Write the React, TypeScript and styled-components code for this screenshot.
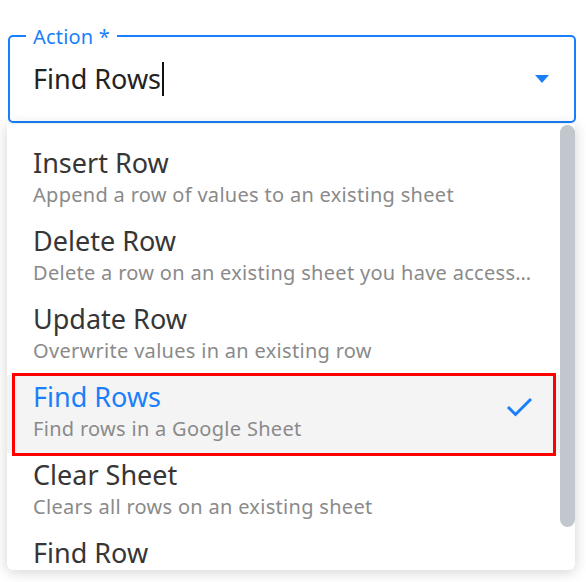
import styled, { createGlobalStyle } from 'styled-components'

const BLUE = '#1a7ffa'

const GlobalStyle = createGlobalStyle`
  body {
    margin: 0;
    background: #ffffff;
    font-family: 'Noto Sans', 'Open Sans', sans-serif;
  }
`

const SPage = styled.div`
  padding-top: 35px;
  width: 586px;
  height: 582px;
  box-sizing: border-box;
  overflow: hidden;
`

const SField = styled.div`
  position: relative;
  margin: 0 10px 0 8px;
  height: 88px;
  box-sizing: border-box;
  border: 2px solid ${BLUE};
  border-radius: 5px;
  display: flex;
  align-items: center;
  padding: 0 25px 0 23px;
`

const SLabel = styled.span`
  position: absolute;
  top: -13px;
  left: 16px;
  padding: 0 7px;
  background: #ffffff;
  color: ${BLUE};
  font-size: 20px;
  line-height: 26px;
  letter-spacing: 0.2px;
`

const SValue = styled.span`
  font-size: 27px;
  color: #222222;
  line-height: 36px;
`

const SCaret = styled.span`
  display: inline-block;
  width: 2px;
  height: 34px;
  margin-left: 1px;
  background: #111111;
`

const SArrow = styled.span`
  margin-left: auto;
  width: 0;
  height: 0;
  border-left: 7.5px solid transparent;
  border-right: 7.5px solid transparent;
  border-top: 8px solid ${BLUE};
`

const SMenu = styled.div`
  position: relative;
  z-index: 1;
  margin: 1px 11px 0 7px;
  height: 446px;
  display: flex;
  background: #ffffff;
  border-radius: 0 0 6px 6px;
  box-shadow: 0 2px 14px rgba(0, 0, 0, 0.18);
  overflow: hidden;
`

const SList = styled.ul`
  flex: 1;
  min-width: 0;
  margin: 0;
  padding: 17px 0 0;
  list-style: none;
`

const SItem = styled.li<{ selected?: boolean }>`
  position: relative;
  display: flex;
  align-items: center;
  padding: 4px 27px 10px 26px;
  background: ${(p) => (p.selected ? '#f4f4f4' : 'transparent')};
`

const SHighlight = styled.span`
  position: absolute;
  top: -2px;
  bottom: -3px;
  left: 5px;
  right: 4px;
  border: 3.5px solid #ff0000;
  pointer-events: none;
`

const SText = styled.div`
  flex: 1;
  min-width: 0;
`

const STitle = styled.div<{ selected?: boolean }>`
  font-size: 27px;
  line-height: 36px;
  color: ${(p) => (p.selected ? BLUE : '#363636')};
`

const SDesc = styled.div`
  font-size: 20px;
  line-height: 28px;
  letter-spacing: 0.3px;
  color: #8a8a8a;
  white-space: nowrap;
  overflow: hidden;
  text-overflow: ellipsis;
`

const SCheck = styled.svg`
  flex: none;
  margin: 0 0 9px 10px;
`

const STrack = styled.div`
  width: 15px;
  flex: none;
  padding-top: 1px;
`

const SThumb = styled.div`
  height: 402px;
  border-radius: 8px;
  background: #c2c7ce;
`

const items = [
  { title: 'Insert Row', desc: 'Append a row of values to an existing sheet' },
  { title: 'Delete Row', desc: 'Delete a row on an existing sheet you have access to' },
  { title: 'Update Row', desc: 'Overwrite values in an existing row' },
  { title: 'Find Rows', desc: 'Find rows in a Google Sheet', selected: true },
  { title: 'Clear Sheet', desc: 'Clears all rows on an existing sheet' },
  { title: 'Find Row', desc: 'Find a single row in a Google Sheet' },
]

const App = () => {
  return (
    <SPage>
      <GlobalStyle />
      <SField>
        <SLabel>Action *</SLabel>
        <SValue>Find Rows</SValue>
        <SCaret />
        <SArrow />
      </SField>
      <SMenu>
        <SList>
          {items.map((item) => (
            <SItem key={item.title} selected={item.selected}>
              <SText>
                <STitle selected={item.selected}>{item.title}</STitle>
                <SDesc>{item.desc}</SDesc>
              </SText>
              {item.selected && (
                <SCheck width="27" height="22" viewBox="0 0 27 22">
                  <polyline points="2,11 9.5,18.5 25,3" fill="none" stroke={BLUE} strokeWidth="3" />
                </SCheck>
              )}
              {item.selected && <SHighlight />}
            </SItem>
          ))}
        </SList>
        <STrack>
          <SThumb />
        </STrack>
      </SMenu>
    </SPage>
  )
}

export default App
